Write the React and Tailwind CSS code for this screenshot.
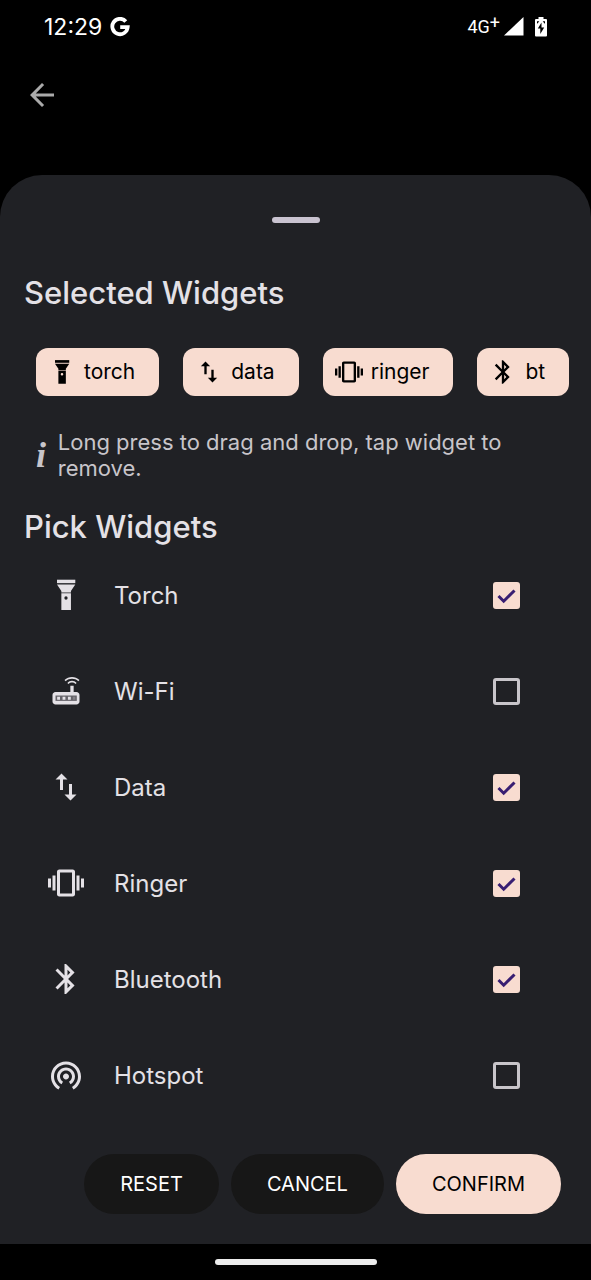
import React, { useState } from "react";
import {
	MdArrowBack,
	MdBluetooth,
	MdImportExport,
	MdVibration,
	MdWifiTethering,
} from "react-icons/md";

const TorchIcon = ({ className }) => (
	<svg viewBox="0 0 24 24" fill="currentColor" className={className}>
		<path d="M6 1.800h12.200v2.300H6z" />
		<path d="M6 5h12.200l-2.900 4.300v1.100H8.900V9.300z" />
		<path
			fillRule="evenodd"
			d="M8.900 10.900h6.400V22H8.900zM12 12.900a1.100 1.100 0 1 0 0 2.200 1.100 1.100 0 0 0 0-2.200z"
		/>
	</svg>
);

const RouterIcon = ({ className }) => (
	<svg viewBox="0 0 24 24" fill="currentColor" className={className}>
		<path d="M20.200 5.500l.8-.8C19.600 3.300 17.800 2.600 16 2.600s-3.600.7-5 2.100l.8.8C13 4.400 14.500 3.900 16 3.900s3 .5 4.200 1.600z" />
		<path d="M19.100 6.600c-.9-.9-1.900-1.400-3.100-1.400s-2.200.5-3.100 1.400l.8.8c.7-.7 1.500-1 2.300-1s1.600.3 2.300 1z" />
		<path d="M19 12.600h-1.900V8.500h-2.200v4.100H5c-1.100 0-2 .9-2 2V19c0 1.100.9 2 2 2h14c1.100 0 2-.9 2-2v-4.400c0-1.100-.9-2-2-2z" />
		<path fill="#66646a" d="M5 15h14.200v3.600H5z" />
		<path d="M6.100 15.800H8v2H6.100zM9.700 15.800h1.900v2H9.700zM13.300 15.800h1.900v2h-1.900z" />
		<path fill="#858288" d="M16.600 15.800h1.600v2h-1.600z" />
	</svg>
);

const GoogleIcon = () => (
	<svg viewBox="0 0 20 20" className="size-5" fill="none">
		<path
			d="M15.800 4.400A7.700 7.700 0 1 0 17.700 10.200H10.200"
			stroke="#fff"
			strokeWidth="3.800"
		/>
	</svg>
);

const SignalIcon = () => (
	<svg viewBox="0 0 20 19" className="h-[19px] w-5" fill="#fff">
		<path d="M19.500 0v18.500H0z" />
	</svg>
);

const BatteryIcon = () => (
	<svg viewBox="0 0 12 20" className="h-5 w-3">
		<path
			fill="#fff"
			d="M3.500 0h5v2H11a1 1 0 0 1 1 1v15.500a1 1 0 0 1-1 1H1a1 1 0 0 1-1-1V3a1 1 0 0 1 1-1h2.500z"
		/>
		<path
			fill="#000"
			d="M6.500 5.500L2.800 11.500h2.500V17l3.900-6.500H6.500zM2 4.300h2.300L2.500 6.500H2zM7.700 4.300H10v2.200h-.5z"
		/>
	</svg>
);

const widgets = [
	{ id: "torch", label: "Torch", chip: "torch", Icon: TorchIcon },
	{ id: "wifi", label: "Wi-Fi", chip: "wifi", Icon: RouterIcon },
	{ id: "data", label: "Data", chip: "data", Icon: MdImportExport },
	{ id: "ringer", label: "Ringer", chip: "ringer", Icon: MdVibration },
	{ id: "bt", label: "Bluetooth", chip: "bt", Icon: MdBluetooth },
	{ id: "hotspot", label: "Hotspot", chip: "hotspot", Icon: MdWifiTethering },
];

const StatusBar = () => (
	<div className="flex h-[53px] items-center pr-11 pl-11 text-white">
		<span className="text-[23px] leading-6">12:29</span>
		<span className="ml-2">
			<GoogleIcon />
		</span>
		<span className="ml-auto flex font-['Roboto',sans-serif] text-lg leading-6">
			4G<span className="-mt-1">+</span>
		</span>
		<span className="ml-1 flex items-center gap-[11px]">
			<SignalIcon />
			<BatteryIcon />
		</span>
	</div>
);

const Chip = ({ widget, onRemove }) => (
	<button
		type="button"
		onClick={onRemove}
		className="flex h-12 shrink-0 items-center gap-2 rounded-xl bg-[#f8dcd0] pr-6 pl-3 text-[21px] text-black"
	>
		<widget.Icon className="size-7" />
		{widget.chip}
	</button>
);

const WidgetRow = ({ widget, checked, onChange }) => (
	<label className="flex h-24 items-center pr-[71px] pl-12 text-2xl text-[#e4e1e6]">
		<widget.Icon className="size-9" />
		<span className="ml-[30px] pt-0.5">{widget.label}</span>
		<span className="ml-auto grid">
			<input
				type="checkbox"
				checked={checked}
				onChange={onChange}
				className="peer col-start-1 row-start-1 size-[27px] appearance-none rounded-[3px] border-3 border-[#c8c5ca] checked:border-[#f8dcd0] checked:bg-[#f8dcd0]"
			/>
			<svg
				viewBox="0 0 27 27"
				fill="none"
				className="pointer-events-none invisible col-start-1 row-start-1 size-[27px] peer-checked:visible"
			>
				<path
					d="M5.500 14l5.200 5.200L21.500 8.500"
					stroke="#381e72"
					strokeWidth="3"
				/>
			</svg>
		</span>
	</label>
);

const App = () => {
	const [selected, setSelected] = useState(["torch", "data", "ringer", "bt"]);

	const toggle = (id) => {
		setSelected(
			selected.includes(id)
				? selected.filter((item) => item !== id)
				: [...selected, id]
		);
	};

	return (
		<div className="flex min-h-screen flex-col bg-black font-['Inter',sans-serif]">
			<StatusBar />
			<div className="flex h-[122px] items-start px-6 pt-6">
				<button type="button" aria-label="Back" className="text-[#aaa]">
					<MdArrowBack className="size-9" />
				</button>
			</div>
			<main className="flex flex-1 flex-col rounded-t-[42px] bg-[#202125]">
				<div className="mx-auto mt-[42px] h-1.5 w-12 rounded-full bg-[#c9c3d0]"></div>
				<h1 className="mt-[50px] px-6 text-[31px] leading-10 font-medium text-[#e4e1e6]">
					Selected Widgets
				</h1>
				<div className="mt-[35px] flex gap-6 overflow-hidden pl-9">
					{selected.map((id) => (
						<Chip
							key={id}
							widget={widgets.find((w) => w.id === id)}
							onRemove={() => toggle(id)}
						/>
					))}
				</div>
				<div className="mt-[33px] flex items-center pr-12 pl-9 text-[#c8c5ca]">
					<span className="w-6 font-['Liberation_Serif',serif] text-4xl leading-10 font-bold italic">
						i
					</span>
					<p className="text-[22px] leading-[26px]">
						Long press to drag and drop, tap widget to remove.
					</p>
				</div>
				<h2 className="mt-[26px] px-6 text-[31px] leading-10 font-medium text-[#e4e1e6]">
					Pick Widgets
				</h2>
				<div className="flex flex-col">
					{widgets.map((widget) => (
						<WidgetRow
							key={widget.id}
							widget={widget}
							checked={selected.includes(widget.id)}
							onChange={() => toggle(widget.id)}
						/>
					))}
				</div>
				<div className="mt-auto flex justify-end gap-3 pr-[30px] pb-[30px] text-xl">
					<button
						type="button"
						className="h-[60px] rounded-full bg-[#171717] px-9 text-white"
					>
						RESET
					</button>
					<button
						type="button"
						className="h-[60px] rounded-full bg-[#171717] px-9 text-white"
					>
						CANCEL
					</button>
					<button
						type="button"
						className="h-[60px] rounded-full bg-[#f8dcd0] px-9 text-black"
					>
						CONFIRM
					</button>
				</div>
			</main>
			<div className="flex h-9 items-center justify-center">
				<div className="h-1.5 w-[162px] rounded-full bg-[#ececec]"></div>
			</div>
		</div>
	);
};

export default App;
